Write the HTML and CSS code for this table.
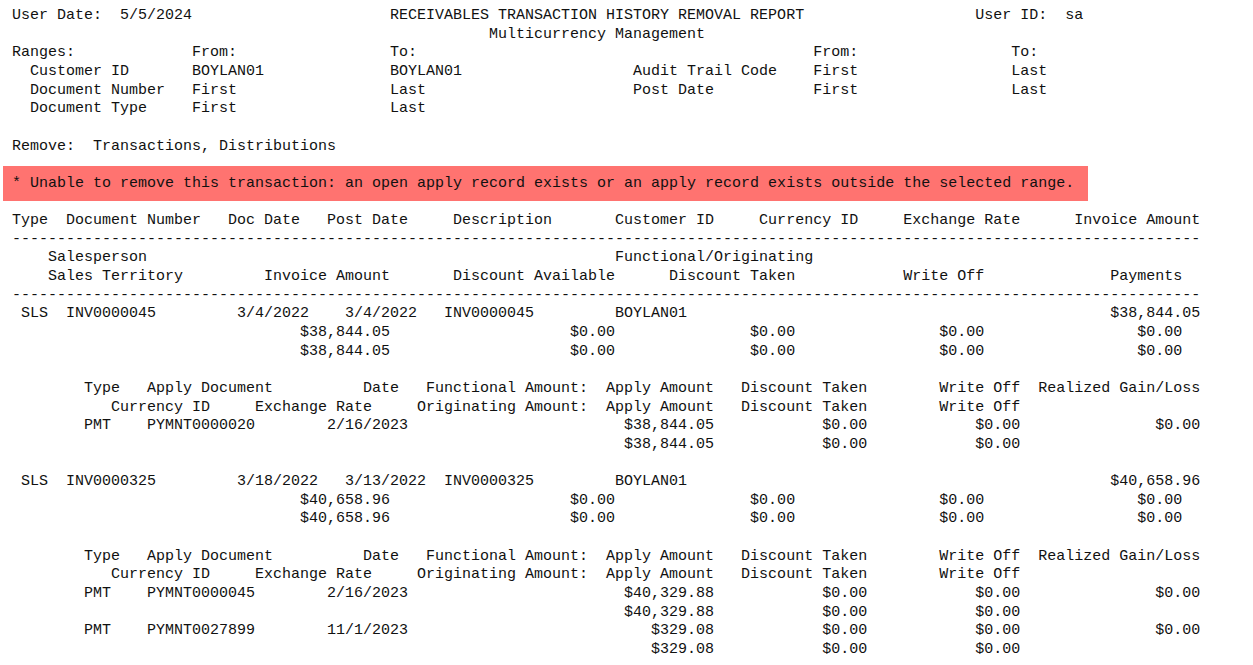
FILE: index.html
```html
<!DOCTYPE html>
<html lang="en">
<head>
<meta charset="utf-8">
<title>Receivables Transaction History Removal Report</title>
<link rel="stylesheet" href="styles.css">
</head>
<body>
<main class="report">
<div class="ln">User Date:  5/5/2024                      RECEIVABLES TRANSACTION HISTORY REMOVAL REPORT                   User ID:  sa</div>
<div class="ln">                                                     Multicurrency Management</div>
<div class="ln">Ranges:             From:                 To:                                            From:                 To:</div>
<div class="ln">  Customer ID       BOYLAN01              BOYLAN01                   Audit Trail Code    First                 Last</div>
<div class="ln">  Document Number   First                 Last                       Post Date           First                 Last</div>
<div class="ln">  Document Type     First                 Last</div>
<div class="ln"></div>
<div class="ln">Remove:  Transactions, Distributions</div>
<div class="alert">* Unable to remove this transaction: an open apply record exists or an apply record exists outside the selected range.</div>
<div class="ln">Type  Document Number   Doc Date   Post Date     Description       Customer ID     Currency ID     Exchange Rate      Invoice Amount</div>
<div class="ln">------------------------------------------------------------------------------------------------------------------------------------</div>
<div class="ln">    Salesperson                                                    Functional/Originating</div>
<div class="ln">    Sales Territory         Invoice Amount       Discount Available      Discount Taken            Write Off              Payments</div>
<div class="ln">------------------------------------------------------------------------------------------------------------------------------------</div>
<div class="ln"> SLS  INV0000045         3/4/2022    3/4/2022   INV0000045         BOYLAN01                                               $38,844.05</div>
<div class="ln">                                $38,844.05                    $0.00               $0.00                $0.00                 $0.00</div>
<div class="ln">                                $38,844.05                    $0.00               $0.00                $0.00                 $0.00</div>
<div class="ln"></div>
<div class="ln">        Type   Apply Document          Date   Functional Amount:  Apply Amount   Discount Taken        Write Off  Realized Gain/Loss</div>
<div class="ln">           Currency ID     Exchange Rate     Originating Amount:  Apply Amount   Discount Taken        Write Off</div>
<div class="ln">        PMT    PYMNT0000020        2/16/2023                        $38,844.05            $0.00            $0.00               $0.00</div>
<div class="ln">                                                                    $38,844.05            $0.00            $0.00</div>
<div class="ln"></div>
<div class="ln"> SLS  INV0000325         3/18/2022   3/13/2022  INV0000325         BOYLAN01                                               $40,658.96</div>
<div class="ln">                                $40,658.96                    $0.00               $0.00                $0.00                 $0.00</div>
<div class="ln">                                $40,658.96                    $0.00               $0.00                $0.00                 $0.00</div>
<div class="ln"></div>
<div class="ln">        Type   Apply Document          Date   Functional Amount:  Apply Amount   Discount Taken        Write Off  Realized Gain/Loss</div>
<div class="ln">           Currency ID     Exchange Rate     Originating Amount:  Apply Amount   Discount Taken        Write Off</div>
<div class="ln">        PMT    PYMNT0000045        2/16/2023                        $40,329.88            $0.00            $0.00               $0.00</div>
<div class="ln">                                                                    $40,329.88            $0.00            $0.00</div>
<div class="ln">        PMT    PYMNT0027899        11/1/2023                           $329.08            $0.00            $0.00               $0.00</div>
<div class="ln">                                                                       $329.08            $0.00            $0.00</div>
</main>
</body>
</html>
```
FILE: styles.css
```css
html, body {
  margin: 0;
  padding: 0;
  background: #ffffff;
}

body {
  width: 1253px;
  height: 665px;
  overflow: hidden;
}

.report {
  padding: 7.15px 0 0 12px;
  font-family: "Courier New", "Liberation Mono", monospace;
  font-size: 15px;
  line-height: 18.65px;
  color: #111111;
}

.ln {
  height: 18.65px;
  white-space: pre;
}

.alert {
  box-sizing: border-box;
  width: 1085px;
  margin: 10px 0 11.3px -9px;
  padding: 8.5px 0 7.5px 9px;
  height: 34.65px;
  background: #ff7370;
  white-space: pre;
}
```
